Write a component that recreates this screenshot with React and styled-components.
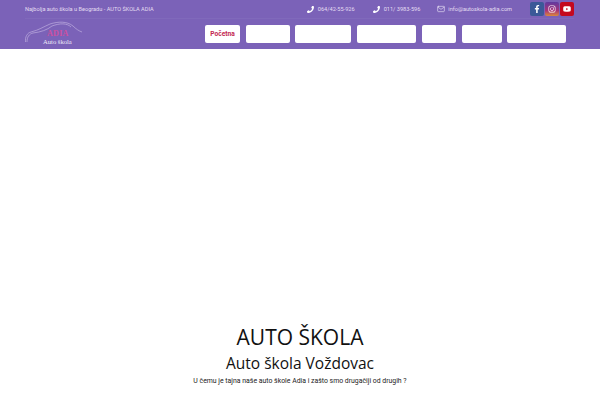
import React from "react";
import styled, { createGlobalStyle } from "styled-components";
import { FaFacebookF, FaInstagram, FaYoutube, FaPhone } from "react-icons/fa";
import { FiMail } from "react-icons/fi";

const Global = createGlobalStyle`
  html, body { margin: 0; padding: 0; background: #fff; overflow: hidden; }
  body { font-family: Roboto, "Liberation Sans", sans-serif; }
`;

const Page = styled.div`
  width: 600px;
  height: 400px;
  display: flex;
  flex-direction: column;
  overflow: hidden;
`;

const Header = styled.header`
  height: 49px;
  flex: none;
  background: #7b62b8;
  display: flex;
  flex-direction: column;
  padding: 0 34px 0 25px;
  box-sizing: border-box;
`;

const TopBar = styled.div`
  height: 19px;
  display: flex;
  align-items: center;
  color: #e4dcf2;
  font-size: 5.6px;
  border-bottom: 1px solid #8069bb;
  margin-right: -8px;
  box-sizing: border-box;
`;

const Tagline = styled.span`
  flex: 1;
  white-space: nowrap;
`;

const Contact = styled.span`
  display: flex;
  align-items: center;
  gap: ${(p) => p.$iconGap}px;
  margin-right: ${(p) => p.$gap}px;
  white-space: nowrap;
  svg { display: block; flex: none; }
`;

const Socials = styled.div`
  display: flex;
  gap: 1px;
`;

const Social = styled.span`
  width: 14px;
  height: 14px;
  border-radius: 2px;
  background: ${(p) => p.$bg};
  color: #fff;
  display: flex;
  align-items: center;
  justify-content: center;
  font-size: 8px;
`;

const NavRow = styled.div`
  flex: 1;
  display: flex;
  align-items: flex-start;
  justify-content: space-between;
`;

const Logo = styled.div`
  position: relative;
  width: 60px;
  height: 27px;
  margin-top: 1px;
`;

const LogoMark = styled.span`
  position: absolute;
  left: 22px;
  top: 9px;
  color: #cf4f9f;
  font-family: "Liberation Serif", serif;
  font-size: 8px;
  font-weight: 700;
  letter-spacing: 0.3px;
`;

const LogoText = styled.span`
  position: absolute;
  left: 18px;
  top: 18px;
  color: #efe9f8;
  font-family: "Liberation Serif", serif;
  font-size: 6.6px;
  white-space: nowrap;
`;

const Nav = styled.nav`
  display: flex;
  gap: 5.5px;
  margin-top: 6px;
`;

const NavItem = styled.a`
  width: ${(p) => p.$w}px;
  height: 18px;
  background: #fff;
  border-radius: 2px;
  display: flex;
  align-items: center;
  justify-content: center;
  color: #c2254f;
  font-size: 6.6px;
  font-weight: 700;
`;

const Hero = styled.main`
  flex: 1;
  background: #fff;
`;

const Intro = styled.section`
  height: 76px;
  flex: none;
  display: flex;
  flex-direction: column;
  align-items: center;
  color: #111;
  font-family: "Open Sans", sans-serif;
`;

const Title = styled.h1`
  margin: 0;
  font-size: 21px;
  font-weight: 400;
  line-height: 27px;
`;

const Subtitle = styled.h2`
  margin: 0;
  font-size: 15.5px;
  font-weight: 400;
  line-height: 24px;
`;

const Lead = styled.p`
  margin: 0;
  font-family: Roboto, sans-serif;
  font-size: 6.9px;
  line-height: 13px;
  color: #222;
`;

const navWidths = [35, 44, 56, 59.5, 34.5, 40, 59];

export default function App() {
  return (
    <Page>
      <Global />
      <Header>
        <TopBar>
          <Tagline>Najbolja auto škola u Beogradu - AUTO ŠKOLA ADIA</Tagline>
          <Contact $iconGap={4} $gap={18}><FaPhone size={7} color="#fff" />064/42-55-926</Contact>
          <Contact $iconGap={4} $gap={17}><FaPhone size={7} color="#fff" />011/ 3983-596</Contact>
          <Contact $iconGap={3} $gap={18}><FiMail size={8} />info@autoskola-adia.com</Contact>
          <Socials>
            <Social $bg="#3b5998"><FaFacebookF /></Social>
            <Social $bg="linear-gradient(180deg,#5f3aa0 0%,#a8327a 60%,#d98a3a 100%)"><FaInstagram /></Social>
            <Social $bg="#c4091f"><FaYoutube /></Social>
          </Socials>
        </TopBar>
        <NavRow>
          <Logo>
            <svg width="60" height="27" viewBox="0 0 60 27" fill="none" stroke="#c9bbe6" strokeWidth="0.6">
              <path d="M0.5 22C0 17 2 13 6 12C14 10 18 7 25 4C33 1.500 42 1 48 6C51 9 54 11 57 12" />
              <path d="M2 22C2 17 4 14 8 13C16 12 22 10 27 6C35 3 42 3 46 7" />
            </svg>
            <LogoMark>ADIA</LogoMark>
            <LogoText>Auto škola</LogoText>
          </Logo>
          <Nav>
            {navWidths.map((w, i) => (
              <NavItem key={i} $w={w}>{i === 0 ? "Početna" : ""}</NavItem>
            ))}
          </Nav>
        </NavRow>
      </Header>
      <Hero />
      <Intro>
        <Title>AUTO ŠKOLA</Title>
        <Subtitle>Auto škola Voždovac</Subtitle>
        <Lead>U čemu je tajna naše auto škole Adia i zašto smo drugačiji od drugih ?</Lead>
      </Intro>
    </Page>
  );
}
